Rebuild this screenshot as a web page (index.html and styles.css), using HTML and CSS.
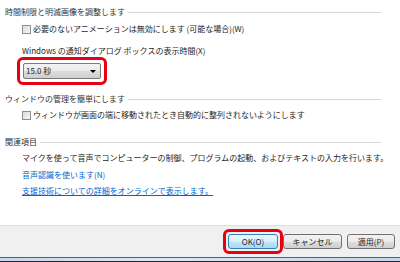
FILE: index.html
```html
<!DOCTYPE html>
<html lang="ja">
<head>
<meta charset="utf-8">
<link rel="stylesheet" href="styles.css">
</head>
<body>
<div class="page">
  <div class="content">
    <div class="group-head first"><span class="group-title">時間制限と明滅画像を調整します</span><span class="rule"></span></div>
    <label class="check-row r1"><span class="box"></span><span>必要のないアニメーションは無効にします (可能な場合)(W)</span></label>
    <div class="text-row r2">Windows の通知ダイアログ ボックスの表示時間(X)</div>
    <div class="mark combo-mark">
      <div class="combo"><span class="combo-value">15.0 秒</span><span class="arrow"></span></div>
    </div>
    <div class="group-head g2"><span class="group-title">ウィンドウの管理を簡単にします</span><span class="rule"></span></div>
    <label class="check-row r3"><span class="box"></span><span>ウィンドウが画面の端に移動されたとき自動的に整列されないようにします</span></label>
    <div class="group-head g3"><span class="group-title">関連項目</span><span class="rule"></span></div>
    <div class="text-row r4">マイクを使って音声でコンピューターの制御、プログラムの起動、およびテキストの入力を行います。</div>
    <div class="text-row r5"><a class="link">音声認識を使います(N)</a></div>
    <div class="text-row r6"><a class="link underline">支援技術についての詳細をオンラインで表示します。</a></div>
  </div>
  <div class="footer">
    <div class="buttons">
      <div class="mark ok-mark"><button class="btn default">OK(O)</button></div>
      <button class="btn cancel">キャンセル</button>
      <button class="btn apply">適用(P)</button>
    </div>
    <div class="frame-edge"></div>
  </div>
</div>
</body>
</html>
```

FILE: styles.css
```css
html, body {
  margin: 0;
  padding: 0;
  background: #ffffff;
}
body {
  font-family: "Noto Sans CJK JP", "Liberation Sans", sans-serif;
  font-size: 8px;
  color: #1e1e1e;
}
.page {
  width: 400px;
  height: 262px;
  display: flex;
  flex-direction: column;
  overflow: hidden;
}
.content {
  flex: 1;
  padding: 5px 19px 0 5px;
}
.group-head {
  display: flex;
  align-items: center;
  height: 14px;
  line-height: 14px;
}
.group-title {
  color: #333333;
  white-space: nowrap;
}
.rule {
  flex: 1;
  height: 0;
  border-top: 1px solid #d9d9d9;
  margin-left: 3px;
}
.g2 { margin-top: 7px; }
.g3 { margin-top: 13px; }

.check-row {
  display: flex;
  align-items: center;
  height: 14px;
  line-height: 14px;
  padding-left: 17px;
  white-space: nowrap;
}
.r1 { margin-top: 3px; }
.r3 { margin-top: 2px; }
.box {
  width: 7px;
  height: 7px;
  border: 1px solid #8f8f8f;
  background: linear-gradient(135deg, #dcdcdc, #f6f6f6);
  margin-right: 2px;
  flex: none;
}
.text-row {
  height: 14px;
  line-height: 14px;
  padding-left: 17px;
  white-space: nowrap;
}
.r2 { margin-top: 8px; height: 13px; }
.r4 { margin-top: 2px; }
.r5 { margin-top: 3px; }
.r6 { margin-top: 2px; }
.link {
  color: #0066cc;
}
.underline {
  text-decoration: underline;
}

.mark {
  display: inline-flex;
  border: 3px solid #e60012;
  border-radius: 6px;
}
.combo-mark {
  margin-left: 12px;
  padding: 3px;
}
.combo {
  box-sizing: border-box;
  width: 78px;
  height: 16px;
  border: 1px solid #7a7a7a;
  border-radius: 2px;
  background: linear-gradient(#f3f3f3, #ebebeb 50%, #dddddd 51%, #cfcfcf);
  display: flex;
  align-items: center;
  padding-left: 2px;
  padding-right: 4px;
}
.combo-value {
  flex: 1;
  line-height: 14px;
}
.arrow {
  width: 0;
  height: 0;
  border-left: 3px solid transparent;
  border-right: 3px solid transparent;
  border-top: 3px solid #000;
}

.footer {
  height: 36px;
  border-top: 1px solid #dfdfdf;
  background: #f0f0f0;
  display: flex;
  flex-direction: column;
}
.buttons {
  flex: 1;
  display: flex;
  justify-content: flex-end;
  align-items: center;
  padding-right: 5px;
  padding-top: 0;
}
.ok-mark {
  padding: 2px;
}
.btn {
  box-sizing: border-box;
  height: 15px;
  padding: 0;
  margin: 0;
  font-family: "Noto Sans CJK JP", "Liberation Sans", sans-serif;
  font-size: 8px;
  line-height: 13px;
  color: #1e1e1e;
  border: 1px solid #707070;
  border-radius: 3px;
  background: linear-gradient(#f2f2f2, #ebebeb 50%, #dddddd 51%, #cfcfcf);
}
.default {
  width: 50px;
  border-color: #3c7fb1;
  background: linear-gradient(#eaf6fd, #d9f0fc 50%, #bee6fd 51%, #a7d9f5);
}
.cancel {
  width: 59px;
  margin-left: 0;
}
.apply {
  width: 48px;
  margin-left: 5px;
}
.frame-edge {
  height: 3px;
  border-top: 1px solid #56606d;
  border-bottom: 1px solid #1f2630;
  background: linear-gradient(90deg, #c6d8ee, #dbe7f5 40%, #c4d6ec);
}
```
